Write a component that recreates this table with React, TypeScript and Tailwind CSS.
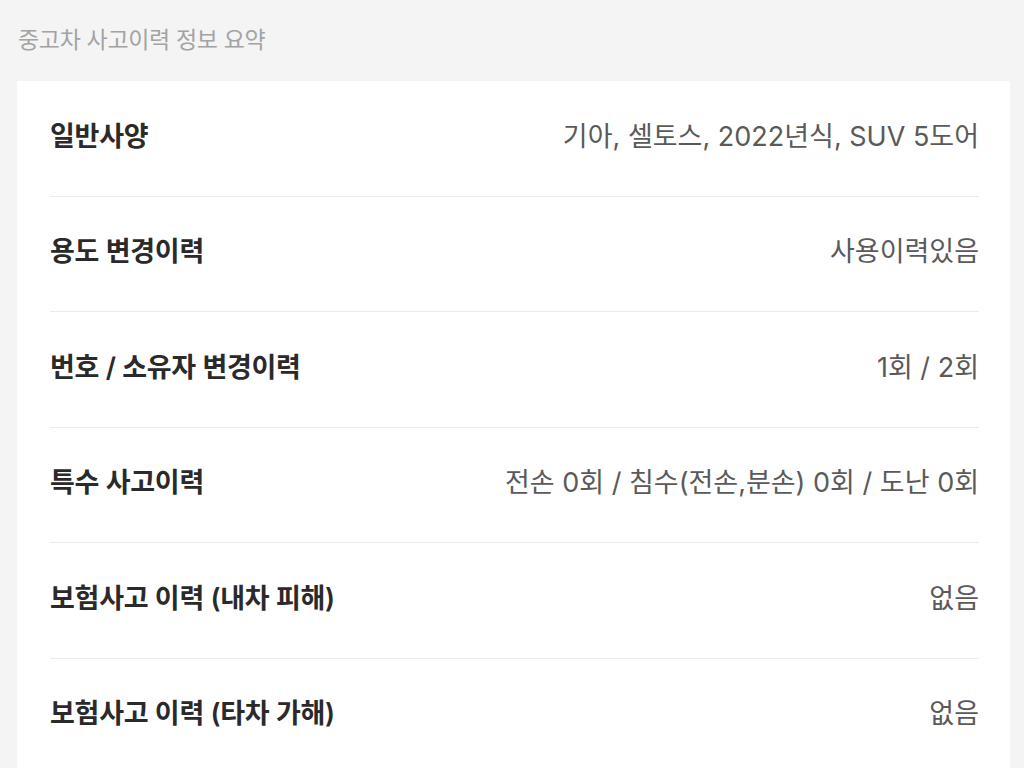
const rows: { label: string; value: string }[] = [
  { label: "일반사양", value: "기아, 셀토스, 2022년식, SUV 5도어" },
  { label: "용도 변경이력", value: "사용이력있음" },
  { label: "번호 / 소유자 변경이력", value: "1회 / 2회" },
  { label: "특수 사고이력", value: "전손 0회 / 침수(전손,분손) 0회 / 도난 0회" },
  { label: "보험사고 이력 (내차 피해)", value: "없음" },
  { label: "보험사고 이력 (타차 가해)", value: "없음" },
];

export default function App() {
  return (
    <div
      className="min-h-screen w-[1024px] overflow-hidden bg-[#f4f4f4]"
      style={{ fontFamily: 'Inter, "Noto Sans CJK KR", sans-serif' }}
    >
      <h1 className="pl-[18px] pt-[25px] pb-[26px] text-[23px] leading-[30px] font-normal tracking-[-0.015em] text-[#a3a3a3]">
        중고차 사고이력 정보 요약
      </h1>
      <section className="ml-[17px] w-[993px] bg-white pl-[33px] pr-[31px]">
        {rows.map((row, i) => (
          <div
            key={row.label}
            className={
              "flex items-center justify-between pt-[40.5px] pb-[44px] " +
              (i < rows.length - 1 ? "border-b border-[#ebebeb]" : "")
            }
          >
            <span className="text-[27px] leading-[30px] font-semibold tracking-[-0.01em] text-[#2a2a2a]">
              {row.label}
            </span>
            <span className="text-[27px] leading-[30px] text-[#5a5a5a]">
              {row.value}
            </span>
          </div>
        ))}
      </section>
    </div>
  );
}
